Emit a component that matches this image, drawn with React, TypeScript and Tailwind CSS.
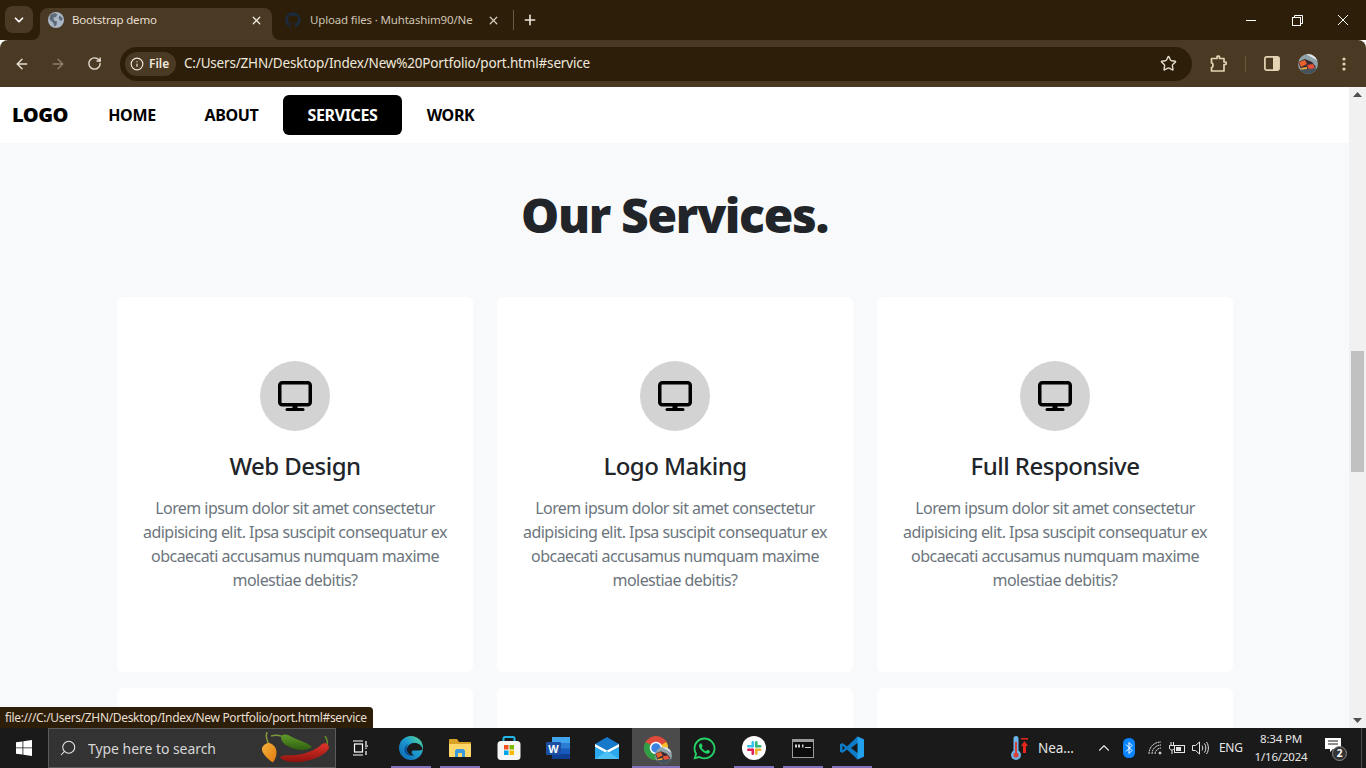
import React from "react";
import { ChevronDown, X, Plus, ArrowLeft, ArrowRight, RotateCw, Info, Star, ChevronUp, Search } from "lucide-react";
import { FaGithub, FaWhatsapp } from "react-icons/fa";

const Avatar = ({ s = 20 }: { s?: number }) => (
  <svg width={s} height={s} viewBox="0 0 20 20">
    <defs><clipPath id={"av" + s}><circle cx="10" cy="10" r="10" /></clipPath></defs>
    <g clipPath={"url(#av" + s + ")"}>
      <rect width="20" height="20" fill="#8ea2a8" />
      <path d="M8 0L20 7V0Z" fill="#dfe7ea" />
      <path d="M0 8L7 5L14 8L18 13L12 18L3 15Z" fill="#3c2a33" />
      <path d="M1 8L7 6L9 10L3 13Z" fill="#e8622c" />
      <path d="M9 11L15 10L17 14L11 16Z" fill="#e8503a" />
      <path d="M3 14L9 13L9 15L4 16Z" fill="#f0b03c" />
      <path d="M0 16L20 14V20H0Z" fill="#45535c" />
    </g>
  </svg>
);

const Monitor = () => (
  <svg width="34" height="30" viewBox="0 0 34 30" fill="none">
    <rect x="1.75" y="1.75" width="30.5" height="22" rx="2.5" stroke="#000" strokeWidth="3.5" />
    <rect x="14.5" y="24" width="5" height="4" fill="#000" />
    <rect x="7.5" y="27" width="19" height="3" rx="1.5" fill="#000" />
  </svg>
);

const Card = ({ title }: { title: string }) => (
  <div className="h-[375px] rounded-md bg-white pt-[64px] text-center">
    <div className="mx-auto flex h-[70px] w-[70px] items-center justify-center rounded-full bg-[#d3d3d3]">
      <Monitor />
    </div>
    <h3 className="mt-[17px] h-[36px] text-[24px] leading-[36px] font-medium text-[#212529] tracking-[-0.52px]">{title}</h3>
    <p className="mt-[12px] text-[16px] leading-[24px] text-[#6c757d] tracking-[-0.55px] whitespace-nowrap">
      Lorem ipsum dolor sit amet consectetur<br />
      adipisicing elit. Ipsa suscipit consequatur ex<br />
      obcaecati accusamus numquam maxime<br />
      molestiae debitis?
    </p>
  </div>
);

const Slot = ({ w = "w-[49px]", bar, active, children }: { w?: string; bar?: boolean; active?: boolean; children: React.ReactNode }) => (
  <div className={`relative flex h-10 shrink-0 items-center justify-center ${w} ${active ? "bg-[#4b4b4b]" : ""}`}>
    {children}
    {bar && <div className={`absolute bottom-0 h-[2px] bg-[#8271bd] ${active ? "left-0 right-0" : "left-[5px] right-[4px]"}`} />}
  </div>
);

export default function App() {
  return (
    <div className="flex h-screen w-[1366px] flex-col overflow-hidden font-['Noto_Sans','Open_Sans',sans-serif]">
      {/* tab strip */}
      <div className="flex h-10 shrink-0 bg-[#2c1e09] text-[11.5px] text-[#e8dfd2]">
        <div className="ml-[5px] mt-[6px] flex h-[27px] w-[28px] items-center justify-center rounded-lg bg-[#4a3a24]">
          <ChevronDown size={14} strokeWidth={3} color="#fff" />
        </div>
        <div className="relative ml-[7px] mt-2 flex h-8 w-[232px] items-center rounded-t-lg bg-[#4a3a24] pb-2 pl-[8px] pr-[9px]">
          <div className="absolute -left-2 bottom-0 h-2 w-2 bg-[#4a3a24]"><div className="h-2 w-2 rounded-br-lg bg-[#2c1e09]" /></div>
          <div className="absolute -right-2 bottom-0 h-2 w-2 bg-[#4a3a24]"><div className="h-2 w-2 rounded-bl-lg bg-[#2c1e09]" /></div>
          <svg width="16" height="16" viewBox="0 0 16 16">
            <circle cx="8" cy="8" r="8" fill="#a9b6c6" />
            <path d="M3 2.2L7 1L9.5 2.5L8 5L5.5 5.5L6 8.5L9 9.5L8.5 13L6.5 14.5L5 10.5L1.5 7.5C1.5 5.5 2 3.5 3 2.2Z" fill="#5f6b78" />
            <path d="M12 3.5L14.8 6.5L13.5 9L11.5 8L10.5 5.5Z" fill="#5f6b78" />
          </svg>
          <span className="ml-[8px] flex-1 tracking-[-0.2px]">Bootstrap demo</span>
          <X size={13} strokeWidth={2.4} color="#f0e8dc" />
        </div>
        <div className="mt-2 flex h-8 items-center pb-2 pl-[13px]">
          <FaGithub size={16} color="#1d2a3a" />
          <div className="ml-[9px] w-[167px] whitespace-nowrap tracking-[-0.16px] text-[#cfc4b4]">Upload files · Muhtashim90/Ne</div>
          <X size={13} strokeWidth={2.4} color="#d8ccba" className="ml-[10px]" />
          <div className="ml-[13px] h-5 w-px bg-[#6a5a42]" />
        </div>
        <Plus size={16} strokeWidth={2.4} color="#f0e8dc" className="ml-[8px] mt-[12px]" />
        <div className="flex-1" />
        <div className="flex h-10">
          <div className="flex w-[47px] items-center justify-center"><div className="h-px w-[10px] bg-white" /></div>
          <div className="flex w-[46px] items-center justify-center">
            <svg width="11" height="11" viewBox="0 0 11 11" fill="none" stroke="#fff"><rect x="0.5" y="2.5" width="8" height="8" /><path d="M2.5 2.5V0.5H10.5V8.5H8.5" /></svg>
          </div>
          <div className="flex w-[46px] items-center justify-center">
            <svg width="12" height="12" viewBox="0 0 12 12" stroke="#fff"><path d="M1 1L11 11M11 1L1 11" /></svg>
          </div>
        </div>
      </div>
      {/* toolbar */}
      <div className="flex h-[47px] shrink-0 items-center rounded-t-lg bg-[#4a3a24]">
        <ArrowLeft size={16} strokeWidth={2.2} color="#e8dfd2" className="ml-[14px]" />
        <ArrowRight size={16} strokeWidth={2.2} color="#8d7f6a" className="ml-[20px]" />
        <RotateCw size={15} strokeWidth={2.2} color="#e8dfd2" className="ml-[21px]" />
        <div className="ml-[18px] flex h-[34px] w-[1072px] items-center rounded-full bg-[#2c1e09] pl-[5px] pr-[15px]">
          <div className="flex h-6 w-[51px] items-center rounded-full bg-[#4a3a24] pl-[5px] text-[12px] font-semibold text-[#f0e8dc]">
            <Info size={14} strokeWidth={2} color="#f0e8dc" />
            <span className="ml-[5px]">File</span>
          </div>
          <span className="ml-[8px] text-[13.5px] tracking-[-0.18px] text-[#f0e8dc]">C:/Users/ZHN/Desktop/Index/New%20Portfolio/port.html#service</span>
          <div className="flex-1" />
          <Star size={17} strokeWidth={2} color="#e3d9ca" />
        </div>
        <svg className="ml-[17px]" width="18" height="18" viewBox="0 0 18 18" fill="none" stroke="#e6d3b3" strokeWidth="1.7" strokeLinejoin="round">
          <path d="M6 3.5H8V1.8C8 1 10.5 1 10.5 1.8V3.5H15V7H16.6C17.4 7 17.4 9.5 16.6 9.5H15V16H2.5V12.5C4.5 12.5 4.5 8 2.5 8V3.5Z" />
        </svg>
        <div className="ml-[18px] h-[16px] w-px bg-[#6a5a42]" />
        <svg className="ml-[18px]" width="16" height="15" viewBox="0 0 16 15">
          <rect x="0.9" y="0.9" width="14.2" height="13.2" rx="2" fill="none" stroke="#e6d3b3" strokeWidth="1.7" />
          <rect x="9" y="1" width="6" height="13" fill="#e6d3b3" />
        </svg>
        <div className="ml-[18px] mt-px"><Avatar /></div>
        <svg className="ml-[24px]" width="4" height="14" viewBox="0 0 4 14" fill="#e6d3b3"><circle cx="2" cy="2" r="1.6" /><circle cx="2" cy="7" r="1.6" /><circle cx="2" cy="12" r="1.6" /></svg>
      </div>
      {/* page */}
      <div className="relative flex min-h-0 flex-1">
        <div className="min-w-0 flex-1 overflow-hidden bg-[#f8f9fa]">
          <nav className="flex h-[56px] items-center bg-white pl-[12px] font-bold text-black">
            <span className="w-[72px] text-[20px] font-black tracking-[-0.5px]">LOGO</span>
            <span className="w-[96px] text-center text-[16px] tracking-[-0.3px]">HOME</span>
            <span className="w-[103px] text-center text-[16px] tracking-[-0.35px]">ABOUT</span>
            <span className="flex h-10 w-[119px] items-center justify-center rounded-md bg-black text-[16px] tracking-[-0.35px] text-white">SERVICES</span>
            <span className="w-[97px] text-center text-[16px] tracking-[-0.35px]">WORK</span>
          </nav>
          <h1 className="mt-[36px] text-center text-[48px] leading-[72px] font-black text-[#212529] tracking-[-1.35px]">Our Services.</h1>
          <div className="ml-[117px] mt-[46px] grid w-[1116px] grid-cols-3 gap-x-[24px] gap-y-[16px]">
            <Card title="Web Design" />
            <Card title="Logo Making" />
            <Card title="Full Responsive" />
            <div className="h-[375px] rounded-md bg-white" />
            <div className="h-[375px] rounded-md bg-white" />
            <div className="h-[375px] rounded-md bg-white" />
          </div>
        </div>
        {/* scrollbar */}
        <div className="flex w-[17px] shrink-0 flex-col items-center bg-[#f1f1f1]">
          <svg className="mt-[5px]" width="9" height="5" viewBox="0 0 9 5" fill="#505050"><path d="M4.5 0L9 5H0Z" /></svg>
          <div className="mt-[254px] h-[121px] w-[13px] bg-[#c1c1c1]" />
          <div className="flex-1" />
          <svg className="mb-[5px]" width="9" height="5" viewBox="0 0 9 5" fill="#505050"><path d="M0 0H9L4.5 5Z" /></svg>
        </div>
        {/* link status bubble */}
        <div className="absolute bottom-0 left-0 flex h-[21px] w-[373px] items-center rounded-tr-[4px] bg-[#2c1e09] pl-[5px] text-[12px] tracking-[-0.33px] whitespace-nowrap text-[#e8dfd2]">
          file:///C:/Users/ZHN/Desktop/Index/New Portfolio/port.html#service
        </div>
      </div>
      {/* taskbar */}
      <div className="flex h-10 shrink-0 items-center bg-[#1a1a1a] text-white">
        <Slot w="w-[48px]">
          <svg width="16" height="16" viewBox="0 0 16 16" fill="#fff"><path d="M0 2.3L6.5 1.4V7.5H0ZM7.3 1.3L16 0V7.5H7.3ZM0 8.3H6.5V14.6L0 13.7ZM7.3 8.3H16V16L7.3 14.7Z" /></svg>
        </Slot>
        <div className="flex h-10 w-[288px] shrink-0 items-center border border-[#5c5c5c] bg-[#333333] pl-[10px]">
          <Search size={18} strokeWidth={1.4} color="#e8e8e8" className="-scale-x-100" />
          <span className="ml-[11px] text-[14px] tracking-[-0.05px] text-[#d6d6d6]">Type here to search</span>
          <svg className="ml-[45px]" width="70" height="34" viewBox="0 0 70 34">
            <defs>
              <linearGradient id="cho" x1="0" y1="0" x2="1" y2="1"><stop offset="0" stopColor="#f7b23a" /><stop offset="1" stopColor="#e07a10" /></linearGradient>
              <linearGradient id="chg" x1="0" y1="0" x2="0" y2="1"><stop offset="0" stopColor="#5f9a2a" /><stop offset="1" stopColor="#2f5f10" /></linearGradient>
              <linearGradient id="chr" x1="0" y1="0" x2="0" y2="1"><stop offset="0" stopColor="#e0352a" /><stop offset="1" stopColor="#8f120e" /></linearGradient>
            </defs>
            <path d="M6 1C4.5 5 5 8 8 13" stroke="#8a9a3a" strokeWidth="1.5" fill="none" />
            <path d="M8 12C13 13 17 18 15 25C14 29 12 32 11 31C7 28 0 22 1 17C2 14 5 12 8 12Z" fill="url(#cho)" />
            <path d="M10 5C14 4 17 4 20 5" stroke="#7a9a3a" strokeWidth="1.5" fill="none" />
            <path d="M20 5C22 3 26 3 29 5C36 9 46 11 51 16C48 19 40 20 34 18C27 16 19 12 20 5Z" fill="url(#chg)" />
            <path d="M64 5C66 8 67 11 66 14" stroke="#6a8a2a" strokeWidth="1.5" fill="none" />
            <path d="M61 13C64 11 68 13 68 17C65 24 50 31 35 31C28 31 21 30 19 26C24 23 33 25 41 23C49 21 56 18 61 13Z" fill="url(#chr)" />
          </svg>
        </div>
        <Slot w="w-[50px]">
          <svg className="-ml-[2px]" width="16" height="16" viewBox="0 0 16 16" fill="none" stroke="#fff" strokeWidth="1.2"><path d="M1 1H11M1 15H11" /><rect x="2.5" y="4" width="8" height="8" /><path d="M14 1V5M14 7.5V9M14 11V15" /><path d="M13 6H16" /></svg>
        </Slot>
        <Slot bar>
          <svg width="24" height="24" viewBox="0 0 24 24">
            <defs>
              <linearGradient id="eb" x1="0" y1="1" x2="1" y2="0"><stop offset="0" stopColor="#0b62b0" /><stop offset="0.55" stopColor="#1e9bd0" /><stop offset="1" stopColor="#5fe08a" /></linearGradient>
            </defs>
            <circle cx="12" cy="12" r="12" fill="url(#eb)" />
            <path d="M23.5 13.5C23 9 19 6.5 14.5 7C10 7.5 7.5 11 8 14.5C8.5 18 12 20 15 19.5C13 18.5 12 16.5 13 15C14 13.5 21 15.5 23.5 13.5Z" fill="#1a1a1a" />
            <path d="M8 14.5C8.5 18 12 20 15 19.5C11 21 6.5 19 5.5 15C5 12 7 9 9 8C7.5 10 7.5 12.5 8 14.5Z" fill="#0a4f96" />
          </svg>
        </Slot>
        <Slot bar>
          <svg width="22" height="18" viewBox="0 0 22 18">
            <path d="M0 1C0 0.5 0.5 0 1 0H8L10 3H21C21.5 3 22 3.5 22 4V17C22 17.5 21.5 18 21 18H1C0.5 18 0 17.5 0 17Z" fill="#d9a227" />
            <path d="M0 5H22V17C22 17.5 21.5 18 21 18H1C0.5 18 0 17.5 0 17Z" fill="#ffd86b" />
            <path d="M6 18V12C6 11 7 10 8 10H14C15 10 16 11 16 12V18H13V14H9V18Z" fill="#3a9ade" />
          </svg>
        </Slot>
        <Slot>
          <svg width="24" height="24" viewBox="0 0 24 24">
            <path d="M6.5 6V2.5C6.5 1.5 7 1 8 1H16C17 1 17.5 1.5 17.5 2.5V6" stroke="#22b5e8" strokeWidth="2" fill="none" />
            <rect x="0.5" y="5" width="23" height="19" rx="3.5" fill="#f6f6f6" />
            <rect x="7" y="9" width="4.5" height="4.5" fill="#f25022" />
            <rect x="12.5" y="9" width="4.5" height="4.5" fill="#7fba00" />
            <rect x="7" y="14.5" width="4.5" height="4.5" fill="#00a4ef" />
            <rect x="12.5" y="14.5" width="4.5" height="4.5" fill="#ffb900" />
          </svg>
        </Slot>
        <Slot>
          <svg width="24" height="22" viewBox="0 0 24 22">
            <rect x="6" y="0" width="18" height="22" rx="1" fill="#185abd" />
            <rect x="6" y="0" width="18" height="6" fill="#41a5ee" />
            <rect x="6" y="6" width="18" height="5.5" fill="#2b7cd3" />
            <rect x="6" y="17" width="18" height="5" fill="#103f91" />
            <rect x="0" y="5" width="15" height="13" rx="1" fill="#1a4fa3" />
            <text x="7.5" y="15.5" textAnchor="middle" fontSize="11" fontWeight="700" fill="#fff" fontFamily="Liberation Sans">W</text>
          </svg>
        </Slot>
        <Slot w="w-[50px]">
          <svg className="-ml-[1px]" width="24" height="22" viewBox="0 0 24 22">
            <path d="M0 7L12 0L24 7V22H0Z" fill="#1679c9" />
            <path d="M0 7L12 13.5L24 7V10L12 16.5L0 10Z" fill="#ffffff" />
            <path d="M0 10L12 16.5L24 10V22H0Z" fill="#2aa9ee" />
            <path d="M0 22L12 14L24 22Z" fill="#4fc0f4" />
          </svg>
        </Slot>
        <Slot active bar w="w-[48px]">
          <div className="relative -ml-[1px] h-6 w-6">
            <svg width="24" height="24" viewBox="0 0 24 24">
              <circle cx="12" cy="12" r="12" fill="#de4a3b" />
              <path d="M12 12L1.6 6A12 12 0 0 0 12 24Z" fill="#2f9e44" />
              <path d="M12 12L12 24A12 12 0 0 0 22.4 6Z" fill="#f6c026" />
              <circle cx="12" cy="12" r="5.5" fill="#3b82e0" stroke="#fff" strokeWidth="1.5" />
            </svg>
            <div className="absolute -bottom-[4px] -right-[4px]"><Avatar s={17} /></div>
          </div>
        </Slot>
        <Slot><FaWhatsapp size={25} color="#25d366" /></Slot>
        <Slot bar>
          <svg width="24" height="24" viewBox="0 0 24 24">
            <circle cx="12" cy="12" r="12" fill="#fff" />
            <rect x="9.5" y="5" width="2.6" height="6.5" rx="1.3" fill="#36c5f0" />
            <rect x="5" y="9" width="6.5" height="2.6" rx="1.3" fill="#36c5f0" />
            <rect x="13" y="5" width="2.6" height="6.5" rx="1.3" fill="#2eb67d" />
            <rect x="13" y="9" width="6.5" height="2.6" rx="1.3" fill="#2eb67d" />
            <rect x="13" y="12.5" width="2.6" height="6.5" rx="1.3" fill="#ecb22e" />
            <rect x="13" y="12.5" width="6.5" height="2.6" rx="1.3" fill="#ecb22e" />
            <rect x="9.5" y="12.5" width="2.6" height="6.5" rx="1.3" fill="#e01e5a" />
            <rect x="5" y="12.5" width="6.5" height="2.6" rx="1.3" fill="#e01e5a" />
          </svg>
        </Slot>
        <Slot bar>
          <svg width="22" height="19" viewBox="0 0 22 19">
            <rect x="0.5" y="0.5" width="21" height="18" fill="#0c0c0c" stroke="#9a9a9a" />
            <rect x="1" y="1" width="20" height="2" fill="#9a9a9a" />
            <path d="M3 5.5H5V8.5H3ZM6 5.5H8V8.5H6ZM10 5.5H11.5V8.5H10ZM13 8H19V9H13Z" fill="#d0d0d0" />
          </svg>
        </Slot>
        <Slot bar>
          <svg width="24" height="24" viewBox="0 0 24 24">
            <path d="M17.5 0.5L24 3.5V20.5L17.5 23.5L7 13.5L2.5 17L0 15.7V8.3L2.5 7L7 10.5Z" fill="#0f7cc8" />
            <path d="M17.5 0.5L24 3.5V20.5L17.5 23.5Z" fill="#22a0ea" />
            <path d="M17.5 7L11 12L17.5 17Z" fill="#1a1a1a" />
            <path d="M2.5 9.5L5 12L2.5 14.5Z" fill="#1a1a1a" />
          </svg>
        </Slot>
        <div className="flex-1" />
        {/* tray */}
        <div className="flex h-10 items-center">
          <svg className="mr-[9px]" width="18" height="26" viewBox="0 0 18 26">
            <rect x="2.5" y="1" width="5" height="17" rx="2.5" fill="#6cb4e8" />
            <circle cx="5" cy="20" r="5" fill="#6cb4e8" />
            <rect x="4" y="7" width="2" height="12" fill="#d8403a" />
            <circle cx="5" cy="20" r="2.6" fill="#d8403a" />
            <path d="M10 3H17V4.5H10ZM13.5 6L17 11H15V18H12V11H10Z" fill="#e8281e" />
          </svg>
          <span className="w-[57px] text-[13.5px] tracking-[-0.1px] text-[#e6e6e6]">Nea...</span>
          <ChevronUp size={18} strokeWidth={1.5} color="#e6e6e6" />
          <svg className="ml-[10px]" width="12" height="20" viewBox="0 0 12 20">
            <rect width="12" height="20" rx="5.5" fill="#0a84ff" />
            <path d="M3 6.5L9 12.5L6 15.5V4.5L9 7.5L3 13.5" stroke="#fff" strokeWidth="1" fill="none" />
          </svg>
          <svg className="ml-[13px]" width="14" height="14" viewBox="0 0 14 14" fill="none" stroke="#dcdcdc" strokeWidth="1">
            <path d="M1 13C1 6 6 1 13 1M4 13C4 8 8 4 13 4M7 13C7 10 10 7 13 7" strokeDasharray="2 0.6" />
            <circle cx="12" cy="12" r="1" fill="#dcdcdc" />
          </svg>
          <svg className="ml-[7px]" width="16" height="13" viewBox="0 0 16 13" fill="none" stroke="#e6e6e6">
            <rect x="5.5" y="3.5" width="10" height="7" />
            <rect x="7" y="5" width="5" height="4" fill="#e6e6e6" stroke="none" />
            <path d="M2 0V3M4.5 0V3M0.5 3.5H5.5V6C5.5 7.5 4 8 3 8C2 8 0.5 7.5 0.5 6ZM3 8V12" />
          </svg>
          <svg className="ml-[7px]" width="17" height="14" viewBox="0 0 17 14" fill="none" stroke="#e6e6e6">
            <path d="M0.5 4.5H3.5L7.5 1V13L3.5 9.5H0.5Z" />
            <path d="M10 4.5C11 6 11 8 10 9.5M12.5 2.5C14.3 5 14.3 9 12.5 11.5M14.5 1C17 4.5 17 9.5 14.5 13" />
          </svg>
          <span className="ml-[10px] w-[28px] text-[12px] tracking-[-0.3px] text-[#e6e6e6]">ENG</span>
          <div className="ml-[0px] w-[68px] text-center text-[11.5px] leading-[18px] tracking-[-0.2px] text-[#e6e6e6]">
            <div>8:34 PM</div>
            <div>1/16/2024</div>
          </div>
          <div className="relative ml-[10px] h-5 w-5">
            <svg width="17" height="16" viewBox="0 0 17 16" fill="#fff"><path d="M0 0H16V11H8L5 14V11H0Z" /><path d="M3 3H13M3 6H13" stroke="#1a1a1a" /></svg>
            <div className="absolute -bottom-[3px] left-[7px] flex h-[15px] w-[15px] items-center justify-center rounded-full border border-[#8a8a8a] bg-[#333] text-[10px] font-bold text-white">2</div>
          </div>
          <div className="ml-[16px] h-full w-px bg-[#4b4b4b]" />
          <div className="w-[4px]" />
        </div>
      </div>
    </div>
  );
}
